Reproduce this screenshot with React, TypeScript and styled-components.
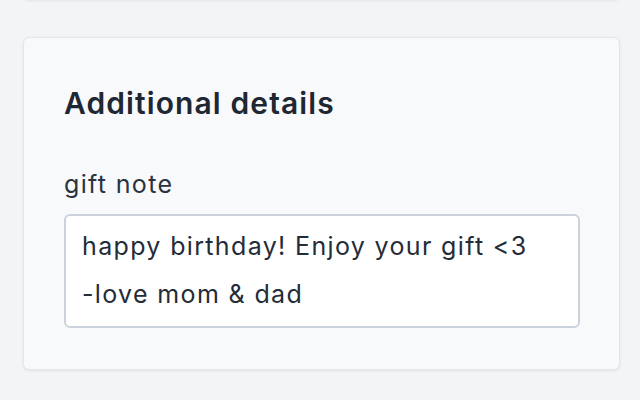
import React from "react";
import styled, { createGlobalStyle } from "styled-components";

const Global = createGlobalStyle`
  html, body { margin: 0; padding: 0; background: #f3f4f6; }
  body { font-family: Inter, "Noto Sans", sans-serif; -webkit-font-smoothing: antialiased; }
  * { box-sizing: border-box; }
`;

const Page = styled.div`
  width: 640px;
  height: 400px;
  overflow: hidden;
  display: flex;
  flex-direction: column;
  gap: 37px;
  padding: 0 20px 0 23px;
  margin-top: -20px;
`;

const Card = styled.section<{ $h?: number }>`
  background: #f8f9fb;
  border: 1px solid #e3e5e9;
  border-radius: 6px;
  box-shadow: 0 1px 3px rgba(0, 0, 0, 0.07);
  ${(p) => (p.$h ? `height: ${p.$h}px;` : "")}
`;

const Body = styled.div`
  padding: 47px 40px 41px 40px;
  display: flex;
  flex-direction: column;
`;

const Heading = styled.h2`
  margin: 0 0 49px 0;
  font-size: 30px;
  font-weight: 600;
  line-height: 36px;
  letter-spacing: 1.1px;
  color: #1f2733;
`;

const Label = styled.label`
  font-size: 25px;
  line-height: 28px;
  letter-spacing: 1.35px;
  color: #2a3340;
  margin-bottom: 16px;
`;

const Note = styled.textarea`
  width: 516px;
  height: 114px;
  resize: none;
  border: 2px solid #cbd2db;
  border-radius: 6px;
  background: #fff;
  padding: 7px 16px;
  font-family: Inter, "Noto Sans", sans-serif;
  font-size: 25px;
  line-height: 47.5px;
  letter-spacing: 1.35px;
  color: #242c38;
  outline: none;
  overflow: hidden;
`;

export default function App() {
  return (
    <>
      <Global />
      <Page>
        <Card $h={20} />
        <Card>
          <Body>
            <Heading>Additional details</Heading>
            <Label htmlFor="gift">gift note</Label>
            <Note id="gift" defaultValue={"happy birthday! Enjoy your gift <3\n-love mom & dad"} />
          </Body>
        </Card>
      </Page>
    </>
  );
}
